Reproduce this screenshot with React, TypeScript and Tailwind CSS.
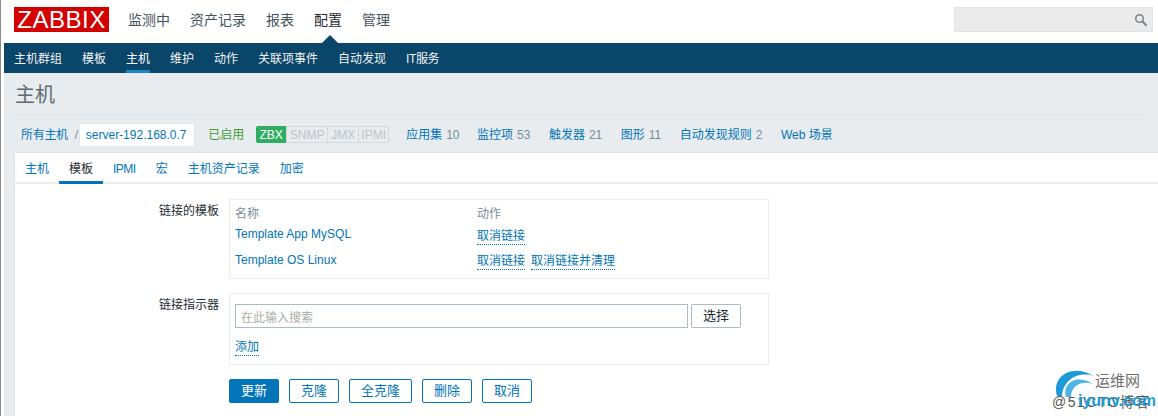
const F = '"Liberation Sans","Noto Sans CJK SC",sans-serif';

function Link({ children, cls = "" }: { children: React.ReactNode; cls?: string }) {
  return <span className={"text-[#0275b8] " + cls}>{children}</span>;
}

function Dotted({ children }: { children: React.ReactNode }) {
  return <span className="text-[#0275b8] border-b border-dotted border-[#0275b8] leading-[15px] inline-block">{children}</span>;
}

function Btn({ children, w, primary }: { children: React.ReactNode; w: string; primary?: boolean }) {
  return (
    <div className={`${w} h-6 rounded-[2px] border border-[#0275b8] flex items-center justify-center text-[13px] ${primary ? "bg-[#0275b8] text-white" : "bg-white text-[#0275b8]"}`}>
      {children}
    </div>
  );
}

export default function App() {
  const top = [["监测中", false], ["资产记录", false], ["报表", false], ["配置", true], ["管理", false]] as const;
  const sub = ["主机群组", "模板", "主机", "维护", "动作", "关联项事件", "自动发现", "IT服务"];
  const tabs = ["主机", "模板", "IPMI", "宏", "主机资产记录", "加密"];
  const stats = [["应用集", "10"], ["监控项", "53"], ["触发器", "21"], ["图形", "11"], ["自动发现规则", "2"], ["Web 场景", ""]];
  return (
    <div className="relative w-[1158px] h-[416px] overflow-hidden bg-white text-[12px]" style={{ fontFamily: F }}>
      <div className="absolute left-0 top-0 bottom-0 w-[1px] bg-[#8c8c8c]" />
      <div className="h-[43px] flex items-center pl-[14px] pr-[5px]">
        <div className="w-[95px] h-[25px] bg-[#d40000] text-white flex items-center justify-center text-[24px] leading-none tracking-[0.5px] mt-[-4px]">ZABBIX</div>
        <div className="flex ml-[19px] gap-[20px] text-[14px] text-[#44525b] mt-[-2px]">
          {top.map(([t, a]) => (
            <span key={t} className={a ? "text-[#1f2c33]" : ""}>{t}</span>
          ))}
        </div>
        <div className="ml-auto w-[199px] h-[25px] bg-[#ebebeb] border border-[#e2e4e6] mt-[-4px] flex items-center justify-end pr-[4px]">
          <svg width="14" height="14" viewBox="0 0 14 14" fill="none" stroke="#7a848b" strokeWidth="1.5">
            <circle cx="5.5" cy="5.5" r="3.8" />
            <path d="M8.3 8.3 L12.5 12.8" strokeWidth="2" />
          </svg>
        </div>
      </div>
      <div className="relative ml-[4px] h-[30px] bg-[#0a466a] flex pl-[10px] gap-[20px] text-[#f2f2f2]">
        <div className="absolute left-[318px] top-[-8px] w-0 h-0 border-l-[8px] border-r-[8px] border-b-[8px] border-l-transparent border-r-transparent border-b-[#0a466a]" />
        {sub.map((s) => (
          <div key={s} className={`h-full flex items-center pt-[1px] ${s === "主机" ? "border-b-[3px] border-[#1a86c8] pt-[4px] text-white" : ""}`}>
            {s === "IT服务" ? <span className="tracking-[-0.4px]">{s}</span> : s}
          </div>
        ))}
      </div>
      <div className="ml-[4px] bg-[#e9ecef]">
        <div className="h-[42px] mx-[10px] border-b border-[#dfe3e7] flex items-center pl-[1px] text-[20px] text-[#5f6b73] pt-[2px]">主机</div>
        <div className="h-[37px] flex items-center pl-[17px] whitespace-nowrap pt-[2px]">
          <Link cls="tracking-[-0.3px]">所有主机</Link>
          <span className="ml-[7px] text-[#768d99]">/</span>
          <div className="ml-[1px] h-[24px] w-[116px] bg-white rounded-[2px] border border-[#e4e7ea] flex items-center justify-center text-[#0275b8] pr-[2px]">server-192.168.0.7</div>
          <span className="ml-[13px] text-[#3f9c35]">已启用</span>
          <div className="ml-[12px] flex h-[17px] text-[12px] leading-none">
            <span className="w-[30px] bg-[#2fad62] text-white flex items-center justify-center rounded-l-[2px]">ZBX</span>
            <span className="w-[42px] border border-[#d3d8dc] text-[#bcc4c9] flex items-center justify-center">SNMP</span>
            <span className="w-[30px] border-y border-[#d3d8dc] text-[#bcc4c9] flex items-center justify-center">JMX</span>
            <span className="w-[31px] border border-[#d3d8dc] text-[#bcc4c9] flex items-center justify-center rounded-r-[2px]">IPMI</span>
          </div>
          <div className="ml-[17px] flex gap-[18.5px]">
            {stats.map(([a, b], i) => (
              <span key={a} className={i === 0 ? "mr-[-1px]" : ""}><Link>{a}</Link>{b && <span className="text-[#768d99] ml-[4px]">{b}</span>}</span>
            ))}
          </div>
        </div>
      </div>
      <div className="ml-[4px] h-[264px] bg-[#e9ecef] pl-[10px]">
        <div className="h-full bg-white border-t border-l border-[#dfe3e7]">
          <div className="h-[31px] border-b-2 border-[#ebeef0] flex pl-[10px] gap-[20px]">
            {tabs.map((t) => (
              <div key={t} className={`h-[31px] flex items-center ${t === "模板" ? "border-b-[3px] border-[#0275b8] text-[#1f2c33] px-[10px] mx-[-10px] pt-[3px]" : "text-[#0275b8]"}`}>
                {t === "IPMI" ? <span className="tracking-[-0.5px]">{t}</span> : t}
              </div>
            ))}
          </div>
          <div className="pl-[143px] pt-[15px] text-[#1f2c33]">
            <div className="flex">
              <div className="w-[71px] text-right pr-[10px] pt-[5px] leading-[14px] shrink-0">链接的模板</div>
              <div className="w-[540px] h-[80px] border border-[#ebeef0] pl-[5px] pt-[7px] grid grid-cols-[242px_1fr] auto-rows-min">
                <span className="text-[#768d99] leading-[15px]">名称</span>
                <span className="text-[#768d99] leading-[15px]">动作</span>
                <span className="text-[#0275b8] leading-[14px] mt-[5px] h-[26px]">Template App MySQL</span>
                <span className="mt-[5px] h-[26px]"><Dotted>取消链接</Dotted></span>
                <span className="text-[#0275b8] leading-[14px]">Template OS Linux</span>
                <span className="flex gap-[6px] mt-[1px]"><Dotted>取消链接</Dotted><Dotted>取消链接并清理</Dotted></span>
              </div>
            </div>
            <div className="flex mt-[14px]">
              <div className="w-[71px] text-right pr-[10px] pt-[5px] leading-[14px] shrink-0">链接指示器</div>
              <div className="w-[540px] h-[72px] border border-[#ebeef0] pl-[5px] pt-[10px]">
                <div className="flex gap-[3px]">
                  <div className="w-[453px] h-6 border border-[#acbbc4] pl-[5px] pt-[3px] flex items-center text-[#acacac]">在此输入搜索</div>
                  <div className="w-[50px] h-6 border border-[#acbbc4] rounded-[2px] flex items-center justify-center text-[13px]">选择</div>
                </div>
                <div className="mt-[10px]"><Dotted>添加</Dotted></div>
              </div>
            </div>
            <div className="flex mt-[14px] ml-[71px] gap-[10px]">
              <Btn w="w-[50px]" primary>更新</Btn>
              <Btn w="w-[50px]">克隆</Btn>
              <Btn w="w-[63px]">全克隆</Btn>
              <Btn w="w-[50px]">删除</Btn>
              <Btn w="w-[50px]">取消</Btn>
            </div>
          </div>
        </div>
      </div>
      <div className="absolute left-[1052px] top-[368px] w-[106px] h-[48px]">
        <svg className="absolute left-0 top-0" width="50" height="40" viewBox="0 0 50 40" fill="none">
          <path d="M5 28 C-1 10 18 -6 42 8 C26 3 11 12 10 28 Z" fill="#1e9ad6" />
          <path d="M14 29 C10 16 24 5 41 16 C29 12 19 18 19 29 Z" fill="#4db5e6" />
        </svg>
        <span className="absolute left-0 top-[24px] text-[14px] text-[#555] tracking-[1.5px] whitespace-nowrap">@51CTO博客</span>
        <span className="absolute left-[43px] top-[2px] text-[15px] leading-[21px] text-[#6e6e6e] whitespace-nowrap">运维网</span>
        <span className="absolute left-[26px] top-[21px] text-[16px] font-bold text-[#1e9ad6] whitespace-nowrap">iyunv.com</span>
      </div>
    </div>
  );
}
